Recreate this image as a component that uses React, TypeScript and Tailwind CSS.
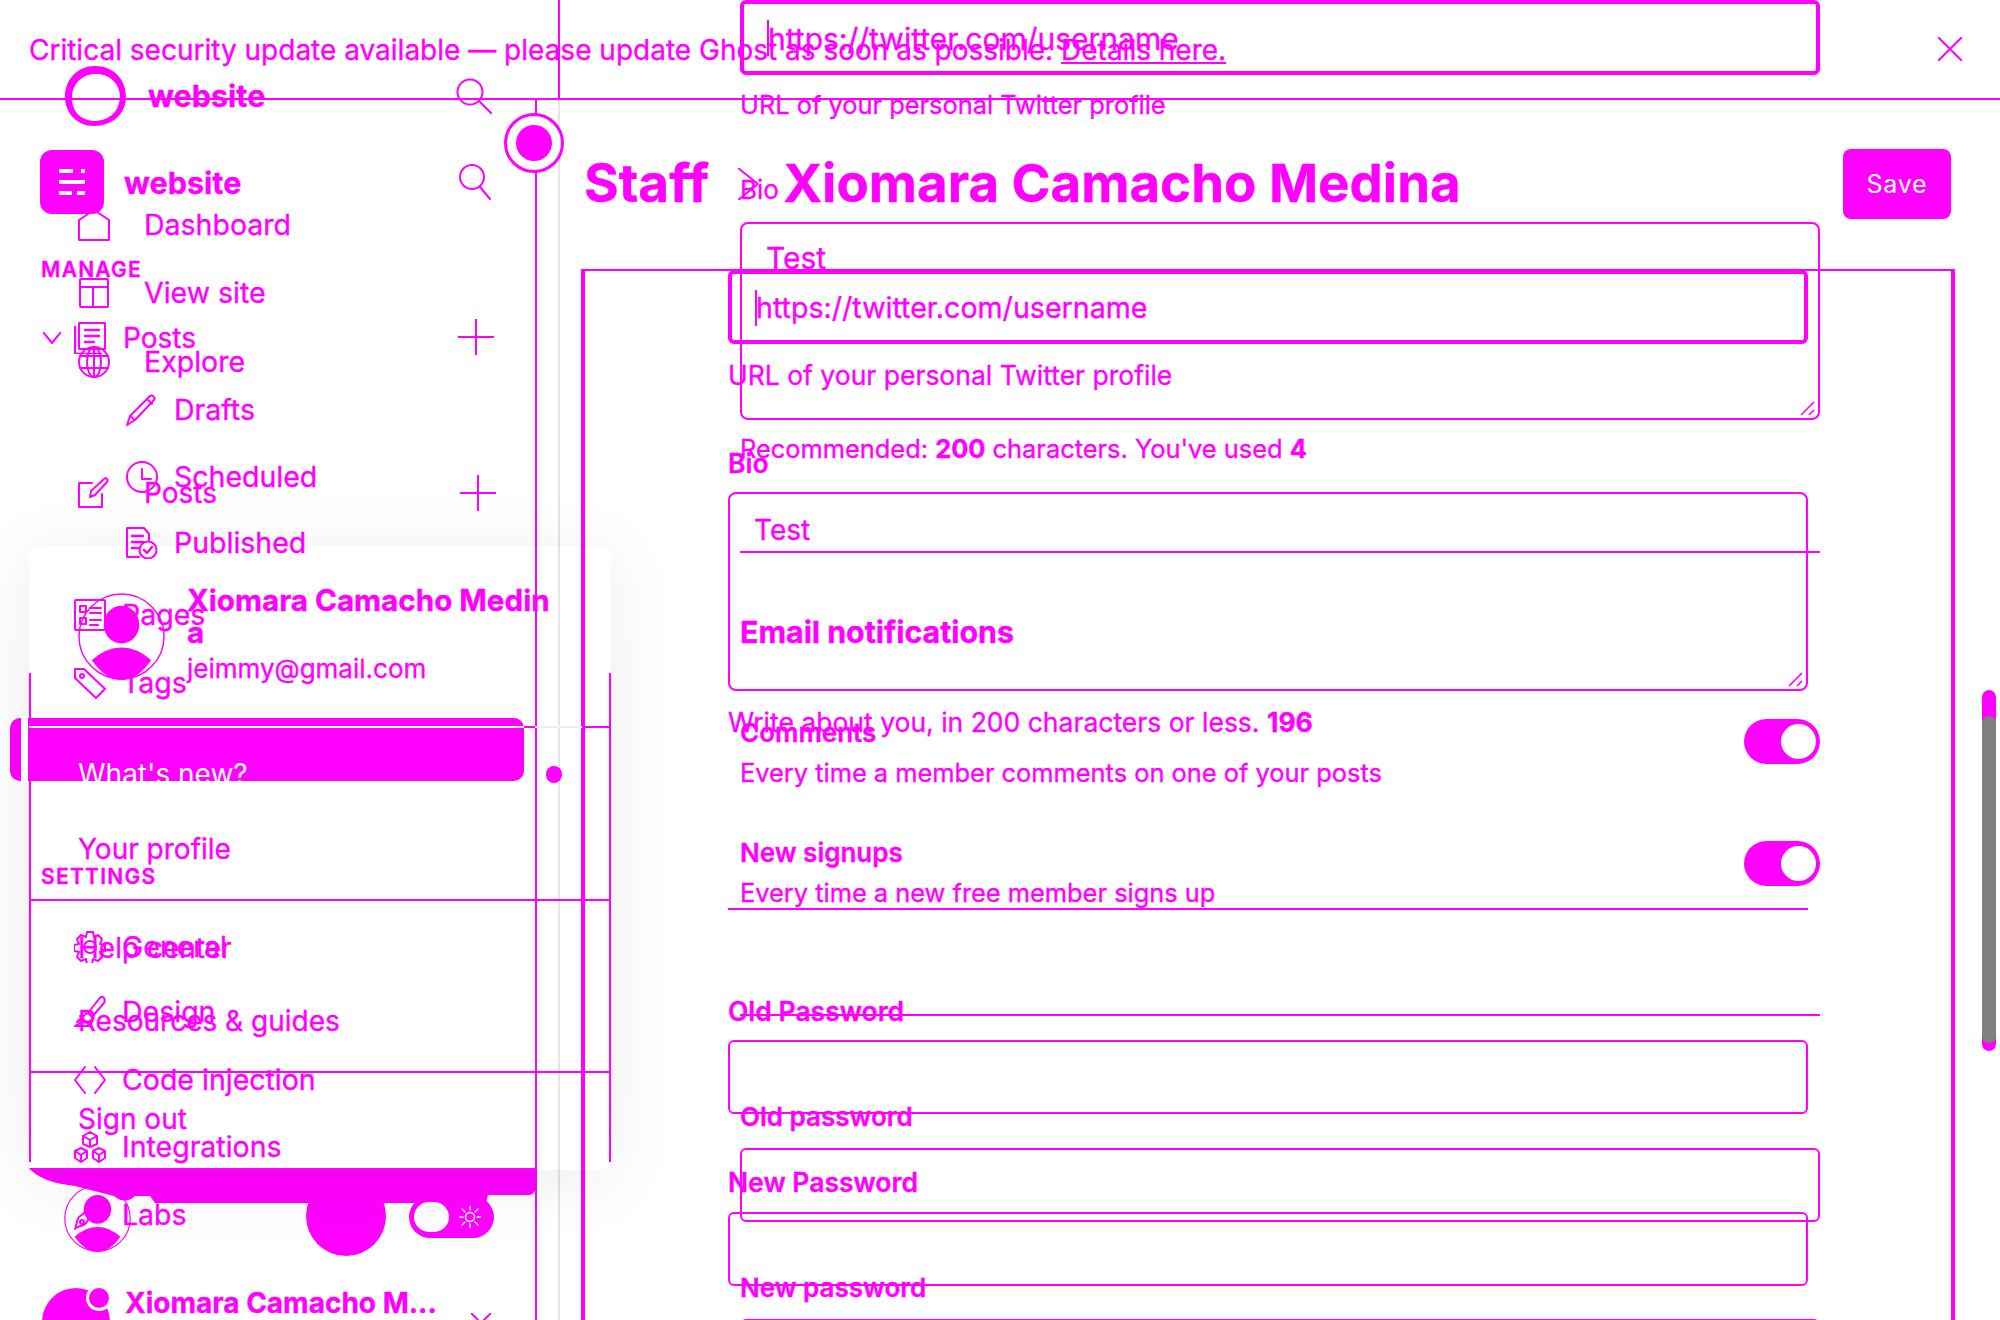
import React from "react";

const S = ({ w = 32, h = 32, vb = "0 0 32 32", sw = 2, children, cls = "" }: { w?: number; h?: number; vb?: string; sw?: number; children: React.ReactNode; cls?: string }) => (
  <svg width={w} height={h} viewBox={vb} fill="none" stroke="currentColor" strokeWidth={sw} strokeLinejoin="round" strokeLinecap="round" className={`shrink-0 ${cls}`}>
    {children}
  </svg>
);

const Search = () => (
  <S w={36} h={36} vb="0 0 36 36"><circle cx="14" cy="14" r="12.5" /><path d="M23 23l12 12" /></S>
);
const Plus = () => (
  <S w={36} h={36} vb="0 0 36 36"><path d="M18 0v36M0 18h36" /></S>
);
const Home = () => <S><path d="M1 31V11L16 1l15 10v20z" /></S>;
const Layout = () => <S><rect x="2" y="2" width="28" height="28" rx="1" /><path d="M2 10h28M15 10v20" /></S>;
const Globe = () => <S><circle cx="16" cy="16" r="15" /><ellipse cx="16" cy="16" rx="7" ry="15" /><path d="M2 10h28M2 22h28M16 1v30" /></S>;
const PenSquare = () => <S><path d="M24 17v13H1V6h13" /><path d="M12 20l1-6L26 2c2-2 5 1 3 3L17 18z" /></S>;
const Doc = () => <S><rect x="5" y="1" width="26" height="26" /><path d="M1 5v27h26M11 8h14M11 14h14M11 20h9" strokeWidth="2.4" /></S>;
const Pencil = () => <S><path d="M1 31l3-9L24 2c2-2 6 2 4 4L9 26zM4 22l5 4M21 5l5 5" /></S>;
const Clock = () => <S><circle cx="16" cy="16" r="15" /><path d="M16 8v10h9" /></S>;
const DocCheck = () => <S><path d="M13 30H1V1h17l5 6v6" /><path d="M6 9h11M6 15h11M6 21h6" strokeWidth="2.4" /><circle cx="22" cy="23" r="8.5" /><path d="M18 23l3 3 5-6" strokeWidth="2.4" /></S>;
const Pages = () => <S><rect x="1" y="1" width="30" height="30" rx="1" /><rect x="6" y="7" width="6" height="6" /><rect x="6" y="19" width="6" height="6" /><path d="M16 9h11M16 14h11M16 21h11M16 26h8" /></S>;
const Tag = () => <S><path d="M1 2h9l21 20-9 9L1 11z" /><circle cx="8" cy="9" r="2" /></S>;
const Gear = () => <S><path d="M16 10a6 6 0 100 12 6 6 0 000-12z" /><path d="M13 1h6l1 5 4-2 4 4-2 5 5 1v6l-5 1 2 5-4 4-5-2-1 5h-5l-1-5-5 2-4-4 2-5-5-1v-6l5-1-2-5 4-4 5 2z" /></S>;
const Brush = () => <S><path d="M30 2c-2-2-4-1-5 1L14 17l4 4L30 7c1-2 1-3 0-5zM14 17c-5 1-5 5-7 8-1 2-3 4-6 5h14c3-2 4-6 3-9" /><path d="M6 20l8 8M3 26l6-6" /></S>;
const Code = () => <S><path d="M11 3L1 16l10 13M21 3l10 13-10 13" /></S>;
const Cubes = () => <S><path d="M16 1l7 4v8l-7 3-7-3V5zM9 5l7 4 7-4M16 9v7" /><path d="M7 17l6 3v7l-6 4-6-4v-7zM1 20l6 4 6-4M7 24v7M25 17l6 3v7l-6 4-6-4v-7zM19 20l6 4 6-4M25 24v7" /></S>;
const Flask = () => <S><path d="M21 2c3-2 7 2 5 5L15 18c-1 4-3 8-8 9-3 1-6 2-6 3 2-4 1-8 4-12l4-3z" /><circle cx="8" cy="23" r="2" /></S>;

const Person = ({ size }: { size: number }) => (
  <svg width={size} height={size} viewBox="0 0 88 88" className="shrink-0">
    <circle cx="44" cy="44" r="43" fill="none" stroke="#ff00ff" strokeWidth="1.5" />
    <ellipse cx="44" cy="32" rx="18" ry="19" fill="#ff00ff" />
    <path d="M14 68Q28 55 44 55Q60 55 74 68Q60 88 44 88Q28 88 14 68Z" fill="#ff00ff" />
  </svg>
);

const Ring = () => (
  <svg width="61" height="60" viewBox="0 0 61 60" className="shrink-0" fill="#ff00ff">
    <path fillRule="evenodd" d="M30 0C48 0 61 13 61 31C61 48 47 60 29 60C12 60 0 47 0 31C0 13 13 0 30 0ZM31 8C17 8 7 18 7 32C7 46 16 54 29 55C44 55 54 46 55 31C55 18 45 8 31 8Z" />
  </svg>
);

const Toggle = ({ mt }: { mt: string }) => (
  <div className={`w-[76px] h-[45px] rounded-full bg-[#ff00ff] flex items-center justify-end pr-[4px] shrink-0 ${mt}`}>
    <div className="w-[35px] h-[35px] rounded-full bg-white" />
  </div>
);

const Grip = () => (
  <svg width="16" height="16" viewBox="0 0 16 16" className="absolute right-[2px] bottom-[2px]" stroke="#ff00ff" strokeWidth="1.6" fill="none">
    <path d="M1 15L14 2M9 15l5-5" />
  </svg>
);

const Row = ({ cls, icon, label, gap = "gap-[16px]" }: { cls: string; icon?: React.ReactNode; label: string; gap?: string }) => (
  <div className={`flex items-center h-[48px] shrink-0 ${gap} ${cls}`}>
    {icon}
    <span className="text-[28.5px] leading-none">{label}</span>
  </div>
);

const Sec = ({ cls, label }: { cls: string; label: string }) => (
  <div className={`h-[40px] shrink-0 flex items-center pl-[41px] text-[21px] font-semibold tracking-[0.06em] ${cls}`}>{label}</div>
);

const Field = ({ cls, thick, text, size }: { cls: string; thick?: boolean; text?: string; size?: string }) => (
  <div className={`h-[74px] rounded-[6px] border-[#ff00ff] flex items-center pl-[24px] relative ${thick ? "border-[4px] pt-[3px]" : "border-2"} ${cls}`}>
    {text && <span className="w-[2px] h-[36px] bg-[#ff00ff] absolute left-[23px] top-[16px]" />}
    {text && <span className={`leading-none ${size}`}>{text}</span>}
  </div>
);

const Hint = ({ cls, children }: { cls: string; children: React.ReactNode }) => (
  <div className={`h-[40px] flex items-center leading-none whitespace-pre ${cls}`}>{children}</div>
);

const Label = ({ cls, text, weight = "font-semibold" }: { cls: string; text: string; weight?: string }) => (
  <div className={`h-[30px] flex items-center leading-none ${weight} ${cls}`}>{text}</div>
);

const ScreenA = () => (
  <div className="absolute inset-0 flex flex-col">
    <div className="h-[100px] shrink-0 border-b-2 border-[#ff00ff] flex items-center pl-[29px] pr-[38px] justify-between">
      <span className="text-[28px] leading-none mt-[2px]">
        Critical security update available — please update Ghost as soon as possible. <u>Details here.</u>
      </span>
      <S w={24} h={24} vb="0 0 24 24"><path d="M0 0l24 24M24 0L0 24" /></S>
    </div>
    <div className="flex flex-1 min-h-0">
      <div className="w-[537px] shrink-0 border-r-2 border-[#ff00ff] flex flex-col">
        <div className="mt-[50px] h-[64px] shrink-0 flex items-center pl-[40px] pr-[44px]">
          <div className="w-[64px] h-[64px] rounded-[12px] bg-[#ff00ff] flex items-center justify-center">
            <svg width="26" height="28" viewBox="0 0 26 28" stroke="#fff" strokeWidth="4">
              <path d="M0 3h14M22 3h4M0 14h26M0 25h13M18 25h8" />
            </svg>
          </div>
          <span className="ml-[20px] mt-[2px] text-[30.5px] font-bold leading-none">website</span>
          <span className="ml-auto flex"><S w={32} h={36} vb="0 0 32 36"><circle cx="13" cy="13" r="12" /><path d="M21 23l10 12" /></S></span>
        </div>
        <Sec cls="mt-[36px]" label="MANAGE" />
        <div className="flex items-center h-[48px] shrink-0 mt-[24px] pl-[43px] pr-[41px]">
          <S w={18} h={12} vb="0 0 18 12"><path d="M0 0l9 11 9-11" /></S>
          <span className="ml-[13px]"><Doc /></span>
          <span className="ml-[17px] text-[28px] leading-none">Posts</span>
          <span className="ml-auto flex -mt-[2px]"><Plus /></span>
        </div>
        <Row cls="mt-[24px] pl-[126px]" icon={<Pencil />} label="Drafts" />
        <Row cls="mt-[19px] pl-[126px]" icon={<Clock />} label="Scheduled" />
        <Row cls="mt-[18px] pl-[126px]" icon={<DocCheck />} label="Published" />
        <Row cls="mt-[24px] pl-[74px]" icon={<Pages />} label="Pages" />
        <Row cls="mt-[20px] pl-[74px]" icon={<Tag />} label="Tags" />
        <div className="mt-[11px] ml-[10px] w-[514px] h-[63px] shrink-0 rounded-[10px] bg-[#ff00ff]" />
        <Sec cls="mt-[76px]" label="SETTINGS" />
        <Row cls="mt-[26px] pl-[74px]" icon={<Gear />} label="General" />
        <Row cls="mt-[17px] pl-[74px]" icon={<Brush />} label="Design" />
        <Row cls="mt-[20px] pl-[74px]" icon={<Code />} label="Code injection" />
        <Row cls="mt-[19px] pl-[74px]" icon={<Cubes />} label="Integrations" />
        <Row cls="mt-[20px] pl-[74px]" icon={<Flask />} label="Labs" />
        <div className="mt-[40px] h-[48px] shrink-0 flex items-center pl-[42px] pr-[44px] relative">
          <div className="w-[68px] h-[68px] rounded-full bg-[#ff00ff] self-start mt-[9px] shrink-0 relative">
            <div className="absolute left-[44px] top-[-3px] w-[26px] h-[26px] rounded-full bg-[#ff00ff] border-[3px] border-white" />
          </div>
          <span className="ml-[15px] text-[28px] font-bold leading-none">Xiomara Camacho M...</span>
          <span className="ml-auto mt-[30px] flex"><S w={20} h={10} vb="0 0 20 10"><path d="M0 0l10 10 10-10" /></S></span>
        </div>
      </div>
      <div className="flex-1 min-w-0 flex flex-col">
        <div className="mt-[49px] h-[70px] shrink-0 flex items-center pl-[47px] pr-[49px]">
          <span className="text-[53px] font-bold leading-none -mt-[2px]">Staff</span>
          <span className="ml-[29px] flex"><S w={20} h={32} vb="0 0 20 32"><path d="M0 0l20 16L0 32" /></S></span>
          <span className="ml-[25px] text-[52.8px] font-bold leading-none -mt-[2px]">Xiomara Camacho Medina</span>
          <div className="ml-auto w-[108px] h-[70px] pt-[2px] rounded-[8px] bg-[#ff00ff] text-white [-webkit-text-stroke:0] flex items-center justify-center text-[25px] tracking-[0.03em]">Save</div>
        </div>
        <div className="mt-[50px] ml-[44px] mr-[45px] flex-1 border-t-2 border-x-[4px] border-[#ff00ff] pl-[143px] pr-[143px]">
          <Field cls="-mt-[1px]" thick text="https://twitter.com/username" size="text-[28.6px]" />
          <Hint cls="mt-[11px] text-[26.5px]">URL of your personal Twitter profile</Hint>
          <Label cls="mt-[53px] text-[26.5px]" text="Bio" />
          <div className="mt-[14px] h-[199px] rounded-[8px] border-2 border-[#ff00ff] relative pl-[24px] pt-[20px] text-[28px] leading-[32px]">
            Test
            <Grip />
          </div>
          <Hint cls="mt-[11px] text-[26.5px]">Write about you, in 200 characters or less. <b>196</b></Hint>
          <div className="mt-[166px] h-[2px] bg-[#ff00ff]" />
          <Label cls="mt-[86px] text-[26.5px]" text="Old Password" />
          <Field cls="mt-[14px]" />
          <Label cls="mt-[53px] text-[26.5px]" text="New Password" />
          <Field cls="mt-[15px]" />
        </div>
      </div>
    </div>
  </div>
);

const Menu = ({ cls, text, white }: { cls: string; text: string; white?: boolean }) => (
  <div className={`h-[48px] shrink-0 flex items-center pl-[49px] text-[28px] leading-none ${white ? "text-white [-webkit-text-stroke:0] relative z-10" : ""} ${cls}`}>{text}</div>
);

const ScreenB = () => (
  <div className="absolute inset-0 flex">
    <div className="w-[560px] shrink-0 border-r-2 border-[#e5e5e5] flex flex-col relative">
      <div className="absolute right-[-2px] top-0 w-[2px] h-[100px] bg-[#ff00ff]" />
      <div className="mt-[66px] h-[60px] shrink-0 flex items-center pl-[65px] pr-[66px]">
        <Ring />
        <span className="ml-[22px] text-[30.5px] font-bold leading-none">website</span>
        <span className="ml-auto flex"><Search /></span>
      </div>
      <Row cls="mt-[75px] pl-[78px]" gap="gap-[34px]" icon={<Home />} label="Dashboard" />
      <Row cls="mt-[20px] pl-[78px]" gap="gap-[34px]" icon={<Layout />} label="View site" />
      <Row cls="mt-[21px] pl-[78px]" gap="gap-[34px]" icon={<Globe />} label="Explore" />
      <div className="mt-[83px] h-[48px] shrink-0 flex items-center pl-[78px] pr-[62px]">
        <PenSquare />
        <span className="ml-[34px] text-[28px] leading-none">Posts</span>
        <span className="ml-auto flex"><Plus /></span>
      </div>

      <svg width="560" height="110" viewBox="0 1160 560 110" className="absolute left-0 top-[1160px]" fill="#ff00ff">
        <path d="M29 1168H535V1190Q534 1195 528 1195H488L486 1203H155L150 1196H135Q125 1205 114 1196L75 1186Q40 1182 29 1168Z" />
      </svg>
      <div className="mt-[668px] h-[71px] shrink-0 flex items-start pl-[64px] relative">
        <Person size={67} />
        <div className="ml-[175px] -mt-[9px] w-[80px] h-[80px] rounded-full bg-[#ff00ff] shrink-0" />
        <div className="ml-[23px] mt-[11px] w-[85px] h-[42px] rounded-full bg-[#ff00ff] shrink-0 flex items-center justify-between pl-[5px] pr-[13px] text-white">
          <div className="w-[35px] h-[30px] rounded-full bg-white" />
          <S w={22} h={22} vb="0 0 22 22" sw={1.4}><circle cx="11" cy="11" r="4.5" /><path d="M11 0v4M11 18v4M0 11h4M18 11h4M3 3l3 3M16 16l3 3M3 19l3-3M16 6l3-3" /></S>
        </div>
      </div>

      <div className="absolute left-[29px] top-[546px] w-[582px] h-[624px] rounded-[10px] shadow-[0_10px_70px_rgba(0,0,0,0.08)] flex flex-col">
        <div className="absolute left-0 top-[127px] bottom-[8px] w-[2px] bg-[#ff00ff]" />
        <div className="absolute right-0 top-[127px] bottom-[8px] w-[2px] bg-[#ff00ff]" />
        <div className="mt-[47px] h-[87px] shrink-0 flex pl-[49px]">
          <Person size={87} />
          <div className="ml-[22px] w-[370px] [word-break:break-all] text-[29.6px] font-bold leading-[32px] -mt-[9px]">
            Xiomara Camacho Medina
            <div className="mt-[8px] text-[26px] font-normal leading-none [word-break:normal]">jeimmy@gmail.com</div>
          </div>
        </div>
        <div className="mt-[46px] h-[2px] shrink-0 bg-[#ff00ff] relative z-10">
          <div className="absolute left-0 w-[495px] h-[2px] bg-white" />
          <div className="absolute left-[506px] w-[47px] h-[2px] bg-[#eeeeee]" />
        </div>
        <div className="absolute left-[-8px] top-[170px] w-[7px] h-[66px] bg-white" />
        <Menu cls="mt-[22px]" text="What's new?" white />
        <Menu cls="mt-[27px]" text="Your profile" />
        <div className="mt-[26px] h-[2px] shrink-0 bg-[#ff00ff]" />
        <Menu cls="mt-[23px]" text="Help center" />
        <Menu cls="mt-[25px]" text="Resources & guides" />
        <div className="mt-[26px] h-[2px] shrink-0 bg-[#ff00ff]" />
        <Menu cls="mt-[22px]" text="Sign out" />
      </div>
    </div>

    <div className="flex-1 min-w-0 pl-[180px] pr-[180px]">
      <Field cls="h-[75px]" thick text="https://twitter.com/username" size="text-[30px]" />
      <Hint cls="mt-[10px] text-[25.4px]">URL of your personal Twitter profile</Hint>
      <Label cls="mt-[50px] text-[26px]" text="Bio" weight="font-normal" />
      <div className="mt-[17px] h-[198px] rounded-[8px] border-2 border-[#ff00ff] relative pl-[24px] pt-[18px] text-[30px] leading-[32px]">
        Test
        <Grip />
      </div>
      <Hint cls="mt-[9px] text-[25.4px]">Recommended: <b>200</b> characters. You've used <b>4</b></Hint>
      <div className="mt-[82px] h-[2px] bg-[#ff00ff]" />
      <div className="mt-[59px] h-[40px] flex items-center text-[30.3px] font-bold leading-none">Email notifications</div>
      <div className="mt-[61px] h-[80px] flex justify-between">
        <div>
          <div className="h-[40px] flex items-center text-[26px] font-semibold leading-none">Comments</div>
          <div className="h-[40px] flex items-center text-[25.4px] leading-none">Every time a member comments on one of your posts</div>
        </div>
        <Toggle mt="mt-[6px]" />
      </div>
      <div className="mt-[40px] h-[80px] flex justify-between">
        <div>
          <div className="h-[40px] flex items-center text-[26px] font-semibold leading-none">New signups</div>
          <div className="h-[40px] flex items-center text-[25.4px] leading-none">Every time a new free member signs up</div>
        </div>
        <Toggle mt="mt-[8px]" />
      </div>
      <div className="mt-[101px] h-[2px] bg-[#ff00ff]" />
      <Label cls="mt-[86px] text-[26px]" text="Old password" />
      <Field cls="mt-[16px]" />
      <Label cls="mt-[51px] text-[26px]" text="New password" />
      <Field cls="mt-[16px]" />
    </div>
  </div>
);

export default function App() {
  return (
    <div className="relative w-[2000px] h-[1320px] overflow-hidden bg-white text-[#ff00ff] [font-family:Inter,sans-serif] [-webkit-text-stroke:0.35px_#ff00ff]">
      <ScreenA />
      <ScreenB />
      {/* dock handle on the sidebar edge */}
      <div className="absolute left-[504px] top-[113px] w-[60px] h-[60px] rounded-full border-[3px] border-[#ff00ff] bg-white flex items-center justify-center">
        <div className="w-[36px] h-[36px] rounded-full bg-[#ff00ff]" />
      </div>
      <div className="absolute left-[546px] top-[766px] w-[16px] h-[17px] rounded-full bg-[#ff00ff]" />
      {/* page scrollbar */}
      <div className="absolute left-[1982px] top-[690px] w-[14px] h-[361px] rounded-full bg-[#ff00ff] pt-[26px] pb-[8px]">
        <div className="h-full rounded-full bg-[#808080]" />
      </div>
    </div>
  );
}
